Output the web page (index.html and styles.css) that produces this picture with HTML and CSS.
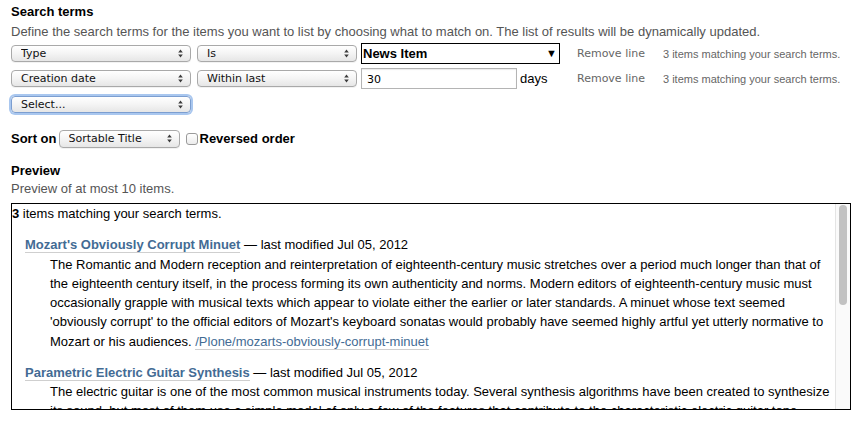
FILE: index.html
```html
<!DOCTYPE html>
<html lang="en">
<head>
  <meta charset="UTF-8" />
  <title>Collection criteria</title>
  <link rel="stylesheet" href="styles.css">
</head>
<body>

  <div class="criteria">
    <h3>Search terms</h3>
    <p class="help">Define the search terms for the items you want to list by choosing what to match on. The list of results will be dynamically updated.</p>

    <!-- one row per criterion -->
    <div class="crit-row first">
      <label class="select w-index">
        <select><option>Type</option></select>
        <svg class="arrows" width="5" height="9" viewBox="0 0 5 9"><path d="M2.5 0.5L4.8 3.5H0.2Z M2.5 8.5L4.8 5.5H0.2Z" fill="#3c3c3c"/></svg>
      </label>
      <label class="select w-op">
        <select><option>Is</option></select>
        <svg class="arrows" width="5" height="9" viewBox="0 0 5 9"><path d="M2.5 0.5L4.8 3.5H0.2Z M2.5 8.5L4.8 5.5H0.2Z" fill="#3c3c3c"/></svg>
      </label>
      <div class="value">
        <label class="plain-select">
          <select><option>News Item</option></select>
          <span class="down">&#9660;</span>
        </label>
      </div>
      <a class="remove" href="#">Remove line</a>
      <span class="count">3 items matching your search terms.</span>
    </div>

    <div class="crit-row second">
      <label class="select w-index">
        <select><option>Creation date</option></select>
        <svg class="arrows" width="5" height="9" viewBox="0 0 5 9"><path d="M2.5 0.5L4.8 3.5H0.2Z M2.5 8.5L4.8 5.5H0.2Z" fill="#3c3c3c"/></svg>
      </label>
      <label class="select w-op">
        <select><option>Within last</option></select>
        <svg class="arrows" width="5" height="9" viewBox="0 0 5 9"><path d="M2.5 0.5L4.8 3.5H0.2Z M2.5 8.5L4.8 5.5H0.2Z" fill="#3c3c3c"/></svg>
      </label>
      <div class="value">
        <input type="text" class="days-input" value="30">
        <span class="unit">days</span>
      </div>
      <a class="remove" href="#">Remove line</a>
      <span class="count">3 items matching your search terms.</span>
    </div>

    <div class="crit-row">
      <label class="select w-index focused">
        <select><option>Select...</option></select>
        <svg class="arrows" width="5" height="9" viewBox="0 0 5 9"><path d="M2.5 0.5L4.8 3.5H0.2Z M2.5 8.5L4.8 5.5H0.2Z" fill="#3c3c3c"/></svg>
      </label>
    </div>

    <div class="sort-row">
      <span class="label">Sort on</span>
      <label class="select w-sort">
        <select><option>Sortable Title</option></select>
        <svg class="arrows" width="5" height="9" viewBox="0 0 5 9"><path d="M2.5 0.5L4.8 3.5H0.2Z M2.5 8.5L4.8 5.5H0.2Z" fill="#3c3c3c"/></svg>
      </label>
      <input type="checkbox" id="reversed">
      <label for="reversed" class="label">Reversed order</label>
    </div>

    <h3 class="preview-title">Preview</h3>
    <p class="help preview-help">Preview of at most 10 items.</p>

    <div class="results">
      <div class="results-body">
        <p class="found"><strong>3</strong> items matching your search terms.</p>
        <dl>
          <dt><a href="#">Mozart's Obviously Corrupt Minuet</a> &mdash; last modified Jul 05, 2012</dt>
          <dd>The Romantic and Modern reception and reinterpretation of eighteenth-century music stretches over a period much longer than that of the eighteenth century itself, in the process forming its own authenticity and norms. Modern editors of eighteenth-century music must occasionally grapple with musical texts which appear to violate either the earlier or later standards. A minuet whose text seemed 'obviously corrupt' to the official editors of Mozart's keyboard sonatas would probably have seemed highly artful yet utterly normative to Mozart or his audiences. <a class="url" href="#">/Plone/mozarts-obviously-corrupt-minuet</a></dd>

          <dt><a href="#">Parametric Electric Guitar Synthesis</a> &mdash; last modified Jul 05, 2012</dt>
          <dd>The electric guitar is one of the most common musical instruments today. Several synthesis algorithms have been created to synthesize its sound, but most of them use a simple model of only a few of the features that contribute to the characteristic electric guitar tone. <a class="url" href="#">/Plone/parametric-electric-guitar-synthesis</a></dd>

          <dt><a href="#">Sonata Form in the Classical Symphony</a> &mdash; last modified Jul 05, 2012</dt>
          <dd>An overview of how composers of the later eighteenth century shaped the first movements of their symphonies, with examples drawn from Haydn and Mozart. <a class="url" href="#">/Plone/sonata-form-in-the-classical-symphony</a></dd>
        </dl>
      </div>
      <!-- scrollbar of the preview pane -->
      <div class="scroll-track"><div class="scroll-thumb"></div></div>
    </div>
  </div>

</body>
</html>
```

FILE: styles.css
```css
body {
  margin: 0;
  padding: 0;
  background-color: #fff;
  color: #000;
  font-family: "Liberation Sans", Arial, sans-serif;
  font-size: 13px;
}
.criteria {
  padding: 4px 13px 0 11px;
}
h3 {
  margin: 0;
  font-size: 13px;
  line-height: 16px;
  font-weight: bold;
}
.help {
  margin: 4px 0 0;
  line-height: 16px;
  color: #555;
}

/* criteria rows */
.crit-row {
  display: flex;
  align-items: center;
  height: 21px;
  margin-top: 5px;
}
.crit-row.first {
  margin-top: 3px;
}
.crit-row.second {
  margin-top: 4px;
}
.select {
  position: relative;
  display: inline-block;
  height: 17px;
}
.select select {
  -webkit-appearance: none;
  appearance: none;
  width: 100%;
  height: 17px;
  margin: 0;
  padding: 0 0 0 9px;
  border: 1px solid #a9a9a9;
  border-radius: 4px;
  background: linear-gradient(#ffffff, #f4f4f4 50%, #e6e6e6);
  box-shadow: 0 1px 0 rgba(0, 0, 0, 0.05);
  font-family: "DejaVu Sans", "Lucida Grande", sans-serif;
  font-size: 11px;
  line-height: 15px;
  color: #111;
  outline: none;
}
.select .arrows {
  position: absolute;
  right: 8px;
  top: 4px;
  pointer-events: none;
}
.select.focused select {
  border-color: #7c9ed0;
  box-shadow: 0 0 0 2px #a9c7ef;
}
.w-index {
  width: 180px;
  margin-right: 6px;
}
.w-op {
  width: 160px;
  margin-right: 4px;
}
.value {
  display: flex;
  align-items: center;
  width: 199px;
  margin-right: 17px;
}
.plain-select {
  position: relative;
  display: block;
  width: 100%;
}
.plain-select select {
  -webkit-appearance: none;
  appearance: none;
  width: 100%;
  height: 21px;
  margin: 0;
  padding: 0 0 0 1px;
  border: 1px solid #000;
  border-radius: 0;
  background: #fff;
  font-family: "Liberation Sans", Arial, sans-serif;
  font-size: 13px;
  font-weight: bold;
  color: #000;
}
.plain-select .down {
  position: absolute;
  right: 3px;
  top: 4px;
  font-size: 11px;
  pointer-events: none;
}
.days-input {
  width: 156px;
  height: 21px;
  box-sizing: border-box;
  margin: 0;
  padding: 1px 5px 0;
  border: 1px solid #b4b4b4;
  box-shadow: inset 0 1px 1px rgba(0, 0, 0, 0.08);
  font-family: "DejaVu Sans", "Lucida Grande", sans-serif;
  font-size: 11px;
}
.unit {
  margin-left: 3px;
  font-size: 13px;
}
.remove {
  width: 63px;
  margin-right: 23px;
  color: #666;
  text-decoration: none;
  white-space: nowrap;
  font-family: "DejaVu Sans", "Lucida Grande", sans-serif;
  font-size: 11px;
}
.count {
  color: #666;
  font-size: 11px;
  white-space: nowrap;
}

/* sort */
.sort-row {
  display: flex;
  align-items: center;
  height: 21px;
  margin-top: 13px;
}
.sort-row .label {
  font-weight: bold;
}
.w-sort {
  width: 121px;
  height: 18px;
  margin-left: 2px;
}
.w-sort select {
  height: 18px;
}
#reversed {
  -webkit-appearance: none;
  appearance: none;
  width: 12px;
  height: 12px;
  margin: 0 2px 0 6px;
  border: 1px solid #9a9a9a;
  border-radius: 3px;
  background: linear-gradient(#fff, #ececec);
}

/* preview */
.preview-title {
  margin-top: 14px;
}
.preview-help {
  margin-top: 2px;
}
.results {
  position: relative;
  height: 205px;
  margin-top: 6px;
  border: 1px solid #000;
  overflow: hidden;
  line-height: 19.25px;
}
.results-body {
  margin-right: 15px;
}
.scroll-track {
  position: absolute;
  top: 0;
  right: 0;
  bottom: 0;
  width: 14px;
  background: #fafafa;
  border-left: 1px solid #e4e4e4;
}
.scroll-thumb {
  margin: 1px 3px 0 3px;
  height: 100px;
  border-radius: 4px;
  background: #c2c2c2;
}
.found {
  margin: 0;
}
.results dl {
  margin: 12px 0 0 13px;
}
.results dt a {
  font-weight: bold;
}
.results a {
  color: #436b94;
  text-decoration: none;
  border-bottom: 1px solid #cfcfcf;
}
.results dd {
  margin: 0 0 12px 25px;
}
```
